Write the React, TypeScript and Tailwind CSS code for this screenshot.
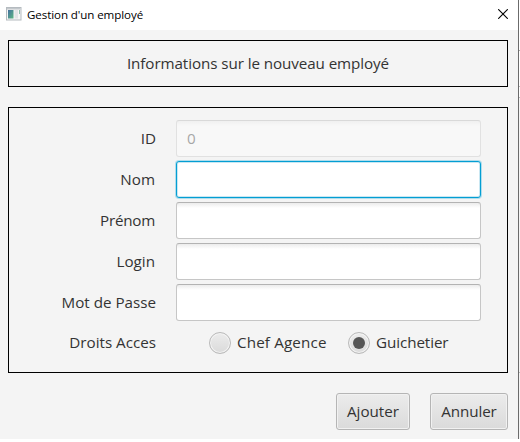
import React from "react";

const field =
  "h-[37px] w-[305px] rounded-[3px] border border-[#c6c6c6] border-t-[#b3b3b3] bg-[linear-gradient(to_bottom,#ececec_0px,#ffffff_5px)] px-[10px] pb-[2px] text-[15.2px] outline-none";

function Row({ label, spacing, height, children }: { label: string; spacing: string; height?: string; children: React.ReactNode }) {
  return (
    <div className={"flex items-center " + (height ?? "h-[37px]")}>
      <div className={"mr-5 w-[147px] shrink-0 whitespace-nowrap pb-[2px] text-right " + spacing}>{label}</div>
      {children}
    </div>
  );
}

function Radio({ checked, label, spacing }: { checked?: boolean; label: string; spacing: string }) {
  return (
    <label className="flex items-center gap-[6px] whitespace-nowrap">
      <span className="flex size-[22px] items-center justify-center rounded-full border border-[#bababa] bg-linear-to-b from-[#ececec] to-[#dadada] shadow-[inset_0_0_0_1px_#f4f4f4]">
        {checked && <span className="size-3 rounded-full bg-[#555555]" />}
      </span>
      <span className={"pb-[2px] " + spacing}>{label}</span>
    </label>
  );
}

const button =
  "h-[37px] rounded-[3px] border border-[#b5b5b5] bg-linear-to-b from-[#ececec] to-[#dadada] pb-[2px] shadow-[inset_0_0_0_1px_#f1f1f1] whitespace-nowrap";

export default function App() {
  return (
    <div className="flex h-[442px] w-[520px] flex-col overflow-hidden bg-white font-['Open_Sans',sans-serif] text-[15.2px] leading-[22px] text-[#333333]">
      <div className="flex h-[439px]">
        <div className="flex w-[518px] flex-col bg-[#f4f4f4]">
          <header className="flex h-[30px] shrink-0 items-center bg-white pr-[10px] pl-[6px]">
            <svg width="16" height="14" viewBox="0 0 16 14" className="mb-[2px]">
              <defs>
                <linearGradient id="pane" x1="0" y1="0" x2="1" y2="1">
                  <stop offset="0" stopColor="#4470a0" />
                  <stop offset="1" stopColor="#5cb882" />
                </linearGradient>
              </defs>
              <rect x="0.5" y="0.5" width="14.5" height="12.5" fill="#f6f6f6" stroke="#b5bbc0" />
              <rect x="1" y="1" width="13.5" height="1.5" fill="#c3c8cc" />
              <rect x="2" y="3" width="5.5" height="8.5" fill="url(#pane)" />
              <rect x="8.5" y="3" width="3.5" height="8.5" fill="#e2e4e6" />
              <rect x="13" y="3" width="1" height="4" fill="#8fbfae" />
            </svg>
            <span className="ml-[5px] whitespace-nowrap text-[11.6px] leading-4 tracking-[-0.1px] text-black">Gestion d'un employé</span>
            <svg className="mb-[2px] ml-auto" width="10" height="10" viewBox="0 0 10 10" stroke="#000" strokeWidth="1.1">
              <path d="M0.2 0.2L9.8 9.8M9.8 0.2L0.2 9.8" />
            </svg>
          </header>
          <main className="flex flex-1 flex-col pt-[10px] pr-[10px] pl-2">
            <div className="flex h-[47px] items-center justify-center border border-black">
              <span className="whitespace-nowrap pb-[2px] tracking-[-0.08px]">Informations sur le nouveau employé</span>
            </div>
            <section className="mt-5 flex h-[266px] flex-col gap-1 border border-black pt-3">
              <Row label="ID" spacing="">
                <input className={field + " text-[#333333] opacity-40"} value="0" disabled readOnly />
              </Row>
              <Row label="Nom" spacing="pr-px">
                <input className="h-[37px] w-[305px] rounded-[3px] border border-[#039ed3] bg-white px-[10px] shadow-[0_0_0_1px_#b0ddec,inset_0_0_0_1px_#c9e7f2] outline-none" />
              </Row>
              <Row label="Prénom" spacing="pr-px tracking-[-0.25px]">
                <input className={field} />
              </Row>
              <Row label="Login" spacing="pr-px">
                <input className={field} />
              </Row>
              <Row label="Mot de Passe" spacing="">
                <input className={field} />
              </Row>
              <Row label="Droits Acces" spacing="" height="h-9">
                <div className="flex pl-[33px]">
                  <div className="w-[139px]">
                    <Radio label="Chef Agence" spacing="tracking-[0.15px]" />
                  </div>
                  <Radio label="Guichetier" spacing="tracking-[-0.08px]" checked />
                </div>
              </Row>
            </section>
            <div className="mt-5 flex justify-end gap-5">
              <button className={button + " w-[74px]"}>Ajouter</button>
              <button className={button + " w-[78px] tracking-[-0.1px]"}>Annuler</button>
            </div>
          </main>
        </div>
        <div className="w-px bg-[#6b6b6b]" />
        <div className="w-px bg-[linear-gradient(to_bottom,#fff_50px,#aaa_50px,#aaa_51px,#fff_51px,#fff_86px,#bbb_86px,#bbb_87px,#fff_87px,#fff_97px,#bbb_97px,#bbb_98px,#f4f4f4_98px,#f4f4f4_372px,#bbb_372px,#bbb_373px,#f4f4f4_373px)]" />
      </div>
    </div>
  );
}
